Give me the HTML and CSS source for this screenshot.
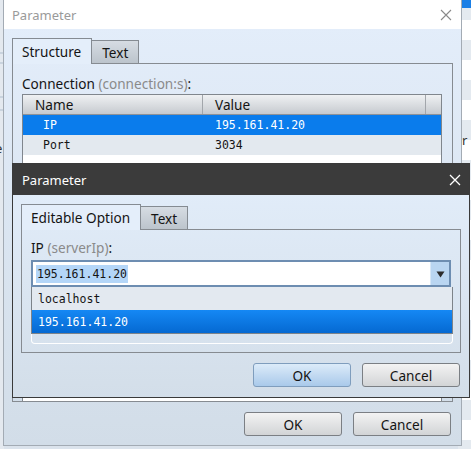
FILE: index.html
```html
<!DOCTYPE html>
<html>
<head>
<meta charset="utf-8">
<link rel="stylesheet" href="styles.css">
</head>
<body>
<div class="bg-table"><span class="bg-glyph">r</span></div>
<div class="bg-left"><span class="bg-glyph-l">e</span></div>

<section class="dlg outer">
  <header class="title title-light">
    <span>Parameter</span>
    <svg class="close" width="12" height="12" viewBox="0 0 12 12"><path d="M1 1L11 11M11 1L1 11" stroke="#8a8a8a" stroke-width="1.1" fill="none"/></svg>
  </header>
  <div class="body">
    <div class="tabs">
      <div class="tab sel">Structure</div>
      <div class="tab">Text</div>
    </div>
    <div class="panel outer-panel">
      <div class="label">Connection <span class="hint">(connection:s)</span>:</div>
      <div class="table">
        <div class="thead">
          <div class="th c1">Name</div>
          <div class="th c2">Value</div>
          <div class="th c3"></div>
        </div>
        <div class="tr sel"><div class="td c1">IP</div><div class="td c2">195.161.41.20</div></div>
        <div class="tr alt"><div class="td c1">Port</div><div class="td c2">3034</div></div>
      </div>
    </div>
    <div class="buttons">
      <button class="btn">OK</button>
      <button class="btn">Cancel</button>
    </div>
  </div>
</section>

<section class="dlg inner">
  <header class="title title-dark">
    <span>Parameter</span>
    <svg class="close" width="12" height="12" viewBox="0 0 12 12"><path d="M1 1L11 11M11 1L1 11" stroke="#ffffff" stroke-width="1.3" fill="none"/></svg>
  </header>
  <div class="body">
    <div class="tabs">
      <div class="tab sel">Editable Option</div>
      <div class="tab">Text</div>
    </div>
    <div class="panel inner-panel">
      <div class="label">IP <span class="hint">(serverIp)</span>:</div>
      <div class="combo">
        <div class="combo-text"><span class="selected-text">195.161.41.20</span></div>
        <div class="combo-btn"><svg width="9" height="7" viewBox="0 0 9 7"><path d="M0.5 0.5H8.5L4.5 6.5Z" fill="#2b2b2b"/></svg></div>
      </div>
      <div class="list">
        <div class="item">localhost</div>
        <div class="item sel">195.161.41.20</div>
      </div>
      <div class="frame-bottom"></div>
    </div>
    <div class="buttons inner-buttons">
      <button class="btn default">OK</button>
      <button class="btn">Cancel</button>
    </div>
  </div>
</section>
</body>
</html>
```

FILE: styles.css
```css
* { box-sizing: border-box; }
html, body { margin: 0; }
body {
  width: 471px;
  height: 449px;
  overflow: hidden;
  position: relative;
  background: #dbe3ec;
  font-family: "Noto Sans", "DejaVu Sans", sans-serif;
  font-size: 13.6px;
  color: #141414;
}

/* backdrop windows */
.bg-table {
  position: absolute;
  left: 458px;
  top: 0;
  width: 13px;
  height: 449px;
  background:
    linear-gradient(#1a7fe6 0 8px, transparent 8px),
    repeating-linear-gradient(#e4eaf0 0 20px, #ffffff 20px 40px);
}
.bg-glyph {
  position: absolute;
  left: 4px;
  top: 131px;
  font-size: 13px;
  color: #333;
}
.bg-left {
  position: absolute;
  left: 0;
  top: 0;
  width: 4px;
  height: 449px;
  background:
    linear-gradient(transparent 0 52px, #c9d3de 52px 54px, transparent 54px 62px, #c9d3de 62px 64px, transparent 64px 96px, #c9d3de 96px 98px, transparent 98px 109px, #c9d3de 109px 111px, transparent 111px),
    #e4e9ef;
  overflow: hidden;
}
.bg-glyph-l {
  position: absolute;
  left: -5px;
  top: 139px;
  font-size: 13px;
  color: #333;
}

/* dialogs */
.dlg {
  position: absolute;
  display: flex;
  flex-direction: column;
}
.outer {
  left: 3px;
  top: -1px;
  width: 459px;
  height: 447px;
  border: 1px solid #a3abb4;
  background: linear-gradient(#e4eefb, #d2dde8);
}
.inner {
  left: 12px;
  top: 163px;
  width: 458px;
  height: 235px;
  border: 1px solid #3a3a3a;
  background: linear-gradient(#e3eefb, #d3dee9);
}

.title {
  display: flex;
  align-items: center;
  justify-content: space-between;
  font-size: 13px;
  flex: none;
}
.title-light {
  height: 29px;
  background: #ffffff;
  color: #9a9a9a;
  padding: 0 9px 0 8px;
}
.title-dark {
  height: 31px;
  background: #3b3b3b;
  color: #ffffff;
  padding: 0 8px 0 9px;
}

.body {
  flex: 1;
  display: flex;
  flex-direction: column;
  padding: 9px 8px 9px 8px;
}
.inner .body { padding: 9px 8px 10px 8px; }

/* tabs */
.tabs {
  display: flex;
  align-items: flex-end;
  height: 25px;
  flex: none;
}
.tab {
  height: 23px;
  padding: 0 10px;
  display: flex;
  align-items: center;
  border: 1px solid #858b92;
  border-bottom: none;
  background: linear-gradient(#d6dce3, #bcc4cc);
  color: #141414;
}
.tab.sel {
  height: 26px;
  margin-bottom: -1px;
  position: relative;
  z-index: 1;
  background: #e4eefa;
  padding: 0 10px 0 9px;
}
.tab.sel + .tab { border-left: none; }

.panel {
  flex: 1;
  border: 1px solid #868b91;
  display: flex;
  flex-direction: column;
  min-height: 0;
}
.outer-panel { padding: 12px 10px 0 9px; }
.inner-panel { padding: 10px 9px 8px 9px; }

.label {
  line-height: 16px;
  height: 16px;
  margin-bottom: 2px;
  white-space: nowrap;
}
.inner-panel .label { margin-bottom: 4px; }
.hint { color: #8a8a8a; }

/* table */
.table {
  flex: 1;
  border: 1px solid #80868d;
  border-bottom: none;
  background: #ffffff;
  font-family: "DejaVu Sans Mono", "Liberation Mono", monospace;
  font-size: 11.5px;
}
.thead {
  display: flex;
  height: 20px;
  border-bottom: 1px solid #8d9298;
  background: linear-gradient(#eff1f3, #c6cacf);
  font-family: "Noto Sans", "DejaVu Sans", sans-serif;
  font-size: 13.6px;
}
.th {
  display: flex;
  align-items: center;
  border-right: 1px solid #a2a6ab;
  padding-left: 12px;
}
.th.c1 { width: 180px; }
.th.c2 { width: 223px; }
.th.c3 { flex: 1; border-right: none; }
.tr {
  display: flex;
  height: 20px;
  align-items: center;
}
.tr.sel { background: #0a7cec; color: #ffffff; }
.tr.alt { background: #e3e9ef; }
.td.c1 { width: 180px; padding-left: 20px; }
.td.c2 { padding-left: 12px; }

/* buttons */
.buttons {
  display: flex;
  justify-content: flex-end;
  gap: 11px;
  margin-top: 10px;
  padding-right: 2px;
  flex: none;
}
.inner-buttons { padding-right: 1px; }
.btn {
  width: 98px;
  height: 24px;
  border: 1px solid #7b7f84;
  border-radius: 3px;
  background: linear-gradient(#f3f3f3, #d2d4d6);
  font-family: "Noto Sans", "DejaVu Sans", sans-serif;
  font-size: 13.6px;
  color: #141414;
  padding: 0;
}
.btn.default {
  border-color: #7f9dbd;
  background: linear-gradient(#dcebf9, #a9c9ea);
}

/* combo */
.combo {
  display: flex;
  height: 27px;
  border: 2px solid #6d8db1;
  background: #ffffff;
  flex: none;
}
.combo-text {
  flex: 1;
  display: flex;
  align-items: center;
  padding-left: 3px;
  font-family: "DejaVu Sans Mono", "Liberation Mono", monospace;
  font-size: 11.5px;
}
.selected-text {
  background: #b4d6f8;
  padding: 2px 1px;
}
.combo-btn {
  width: 19px;
  background: #b9d5f1;
  border-left: 1px solid #d7e7f7;
  display: flex;
  align-items: center;
  justify-content: center;
  padding-top: 1px;
}

.list {
  border: 1px solid #7d8389;
  border-top: none;
  margin-right: -2px;
  font-family: "DejaVu Sans Mono", "Liberation Mono", monospace;
  font-size: 11.5px;
  flex: none;
}
.item {
  height: 23px;
  display: flex;
  align-items: center;
  padding-left: 6px;
  background: #e3e9f0;
}
.item.sel {
  background: linear-gradient(#1588f4, #0569d2);
  color: #ffffff;
}
.frame-bottom {
  height: 10px;
  border: 1px solid #ffffff;
  border-top: none;
  border-radius: 0 0 4px 4px;
  margin-right: -2px;
  flex: none;
}
```
